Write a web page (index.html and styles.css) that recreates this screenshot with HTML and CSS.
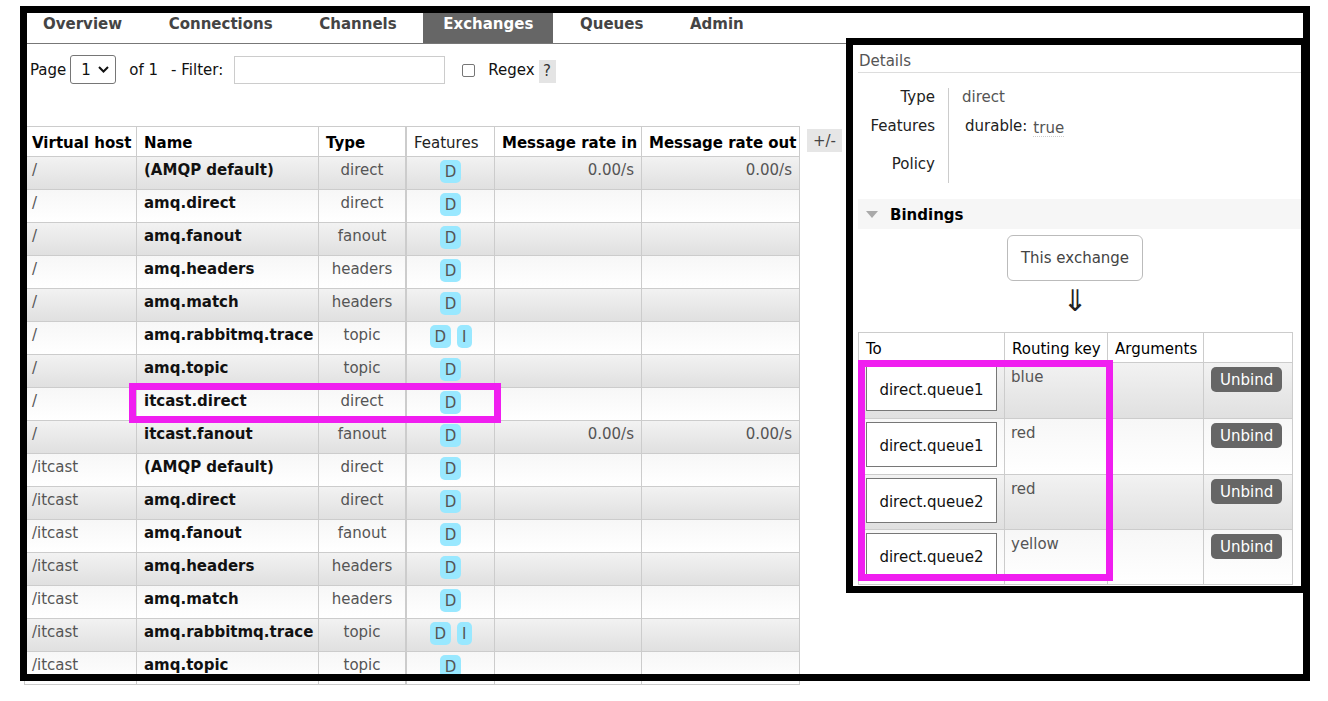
FILE: index.html
```html
<!DOCTYPE html>
<html>
<head>
<meta charset="utf-8">
<title>Exchanges</title>
<link rel="stylesheet" href="styles.css">
</head>
<body>
<div class="page">
  <ul class="tabs">
    <li class="tab">Overview</li>
    <li class="tab">Connections</li>
    <li class="tab">Channels</li>
    <li class="tab active">Exchanges</li>
    <li class="tab">Queues</li>
    <li class="tab">Admin</li>
  </ul>
  <div class="filter">
    <span class="lbl">Page</span>
    <span class="select">1<svg class="chev" width="11" height="7" viewBox="0 0 11 7"><polyline points="1,1 5.5,5.5 10,1" fill="none" stroke="#111" stroke-width="2"/></svg></span>
    <span class="of">of 1</span>
    <span class="flt">- Filter:</span>
    <span class="input"></span>
    <span class="check"></span>
    <span class="regex">Regex</span>
    <span class="help">?</span>
  </div>
  <div class="list-wrap">
    <table class="list">
      <colgroup><col class="c1"><col class="c2"><col class="c3"><col class="c4"><col class="c5"><col class="c6"></colgroup>
      <thead>
        <tr><th>Virtual host</th><th>Name</th><th class="t">Type</th><th class="feat">Features</th><th>Message rate in</th><th>Message rate out</th></tr>
      </thead>
      <tbody>
        <tr><td class="vh">/</td><td class="nm">(AMQP default)</td><td class="t">direct</td><td class="f"><span class="badge">D</span></td><td class="r">0.00/s</td><td class="r">0.00/s</td></tr>
        <tr><td class="vh">/</td><td class="nm">amq.direct</td><td class="t">direct</td><td class="f"><span class="badge">D</span></td><td></td><td></td></tr>
        <tr><td class="vh">/</td><td class="nm">amq.fanout</td><td class="t">fanout</td><td class="f"><span class="badge">D</span></td><td></td><td></td></tr>
        <tr><td class="vh">/</td><td class="nm">amq.headers</td><td class="t">headers</td><td class="f"><span class="badge">D</span></td><td></td><td></td></tr>
        <tr><td class="vh">/</td><td class="nm">amq.match</td><td class="t">headers</td><td class="f"><span class="badge">D</span></td><td></td><td></td></tr>
        <tr><td class="vh">/</td><td class="nm">amq.rabbitmq.trace</td><td class="t">topic</td><td class="f"><span class="badge">D</span><span class="badge b2">I</span></td><td></td><td></td></tr>
        <tr><td class="vh">/</td><td class="nm">amq.topic</td><td class="t">topic</td><td class="f"><span class="badge">D</span></td><td></td><td></td></tr>
        <tr><td class="vh">/</td><td class="nm">itcast.direct</td><td class="t">direct</td><td class="f"><span class="badge">D</span></td><td></td><td></td></tr>
        <tr><td class="vh">/</td><td class="nm">itcast.fanout</td><td class="t">fanout</td><td class="f"><span class="badge">D</span></td><td class="r">0.00/s</td><td class="r">0.00/s</td></tr>
        <tr><td class="vh">/itcast</td><td class="nm">(AMQP default)</td><td class="t">direct</td><td class="f"><span class="badge">D</span></td><td></td><td></td></tr>
        <tr><td class="vh">/itcast</td><td class="nm">amq.direct</td><td class="t">direct</td><td class="f"><span class="badge">D</span></td><td></td><td></td></tr>
        <tr><td class="vh">/itcast</td><td class="nm">amq.fanout</td><td class="t">fanout</td><td class="f"><span class="badge">D</span></td><td></td><td></td></tr>
        <tr><td class="vh">/itcast</td><td class="nm">amq.headers</td><td class="t">headers</td><td class="f"><span class="badge">D</span></td><td></td><td></td></tr>
        <tr><td class="vh">/itcast</td><td class="nm">amq.match</td><td class="t">headers</td><td class="f"><span class="badge">D</span></td><td></td><td></td></tr>
        <tr><td class="vh">/itcast</td><td class="nm">amq.rabbitmq.trace</td><td class="t">topic</td><td class="f"><span class="badge">D</span><span class="badge b2">I</span></td><td></td><td></td></tr>
        <tr><td class="vh">/itcast</td><td class="nm">amq.topic</td><td class="t">topic</td><td class="f"><span class="badge">D</span></td><td></td><td></td></tr>
      </tbody>
    </table>
    <span class="plusminus">+/-</span>
  </div>
</div>

<div class="panel">
  <div class="sec-title">Details</div>
  <div class="facts">
    <div class="f-label">Type</div><div class="f-val">direct</div>
    <div class="f-label">Features</div><div class="f-val f-feat"><span class="k">durable:</span><span class="v">true</span></div>
    <div class="f-label">Policy</div><div class="f-val"></div>
  </div>
  <div class="sec-head"><span class="tri"></span>Bindings</div>
  <div class="bindings">
    <div class="exch"><span class="exch-box">This exchange</span></div>
    <div class="arrow">⇓</div>
    <table class="btable">
      <colgroup><col class="b1"><col class="b2c"><col class="b3"><col class="b4"></colgroup>
      <thead><tr><th>To</th><th>Routing key</th><th>Arguments</th><th></th></tr></thead>
      <tbody>
        <tr><td><span class="qbox">direct.queue1</span></td><td class="rk">blue</td><td></td><td><span class="unbind">Unbind</span></td></tr>
        <tr><td><span class="qbox">direct.queue1</span></td><td class="rk">red</td><td></td><td><span class="unbind">Unbind</span></td></tr>
        <tr><td><span class="qbox">direct.queue2</span></td><td class="rk">red</td><td></td><td><span class="unbind">Unbind</span></td></tr>
        <tr><td><span class="qbox">direct.queue2</span></td><td class="rk">yellow</td><td></td><td><span class="unbind">Unbind</span></td></tr>
      </tbody>
    </table>
  </div>
</div>

<div class="frame-outer"></div>
<div class="mark mark-row"></div>
<div class="mark mark-bind"></div>
</body>
</html>
```

FILE: styles.css
```css
* { box-sizing: border-box; }
body {
  margin: 0;
  font-family: "DejaVu Sans", Verdana, sans-serif;
  font-size: 15px;
  line-height: 18px;
  color: #222;
  background: #fff;
}
.page { padding: 13px 0 0 23px; }

/* tabs */
.tabs {
  display: flex;
  list-style: none;
  margin: 0;
  padding: 0;
  width: 830px;
  border-bottom: 1px solid #777;
}
.tab {
  padding: 2px 20px 10px;
  margin-right: 6.6px;
  font-weight: bold;
  color: #444;
}
.tab.active { background: #666; color: #fff; }

/* filter row */
.filter {
  display: flex;
  align-items: center;
  height: 29px;
  margin-top: 11px;
  padding-left: 7px;
  padding-top: 1px;
  color: #111;
}
.select {
  display: flex;
  align-items: center;
  width: 46px;
  height: 29px;
  margin-left: 4px;
  margin-top: -1px;
  border: 1px solid #767676;
  border-radius: 3px;
  padding-left: 10px;
}
.chev { margin-left: 7px; }
.of { margin-left: 13px; }
.flt { margin-left: 13px; }
.input {
  width: 211px;
  height: 28px;
  margin-left: 11px;
  margin-top: -1px;
  border: 1px solid #ccc;
}
.check {
  width: 13px;
  height: 13px;
  margin-left: 17px;
  border: 1px solid #767676;
  border-radius: 2px;
}
.regex { margin-left: 13px; }
.help {
  margin-left: 4px;
  width: 17px;
  height: 23px;
  line-height: 23px;
  text-align: center;
  background: #e4e4e4;
  color: #333;
  margin-top: 3px;
}

/* main list */
.list-wrap {
  display: flex;
  align-items: flex-start;
  margin-top: 42px;
  margin-left: 1px;
}
table.list {
  border-collapse: separate;
  border-spacing: 0;
  table-layout: fixed;
  width: 776px;
  border-top: 1px solid #ccc;
  border-left: 1px solid #ccc;
}
col.c1 { width: 112px; }
col.c2 { width: 182px; }
col.c3 { width: 88px; }
col.c4 { width: 88px; }
col.c5 { width: 147px; }
col.c6 { width: 158px; }
table.list th, table.list td {
  border-right: 1px solid #ccc;
  border-bottom: 1px solid #ccc;
  padding: 0 7px;
  white-space: nowrap;
}
table.list th {
  height: 30px;
  vertical-align: bottom;
  padding-bottom: 4px;
  text-align: left;
  font-weight: bold;
  color: #000;
  background: #fff;
}
table.list th.feat { font-weight: normal; color: #222; }
table.list th.t, table.list td.t { border-right-width: 2px; }
table.list td {
  height: 33px;
  vertical-align: top;
  padding-top: 4px;
  color: #555;
}
table.list tbody tr:nth-child(odd) td { background: linear-gradient(#f2f2f2, #e0e0e0); }
table.list tbody tr:nth-child(even) td { background: linear-gradient(#f7f7f7, #ffffff); }
table.list td.nm { font-weight: bold; color: #111; }
table.list td.t { text-align: center; }
table.list td.f { text-align: center; }
table.list td.r { text-align: right; }
.badge {
  display: inline-block;
  vertical-align: top;
  height: 23px;
  margin-top: -1px;
  padding: 2px 5px 0;
  line-height: 21px;
  border-radius: 5px;
  background: #99e8ff;
  color: #555;
}
.badge.b2 { margin-left: 6px; }
.plusminus {
  margin-left: 7px;
  margin-top: 3px;
  height: 23px;
  padding: 2px 6px 0;
  line-height: 20px;
  background: #e6e6e6;
  color: #444;
}

/* details panel (pasted overlay) */
.panel {
  position: absolute;
  left: 846px;
  top: 38px;
  width: 462px;
  height: 555px;
  border: 7px solid #000;
  background: #fff;
  padding-left: 5px;
}
.sec-title {
  padding: 7px 0 2px 1px;
  border-bottom: 1px solid #ddd;
  color: #555;
}
.facts {
  display: grid;
  grid-template-columns: 91px 1fr;
  grid-template-rows: 29px 38px 28px;
  margin-top: 15px;
}
.f-label {
  text-align: right;
  padding-right: 13px;
  border-right: 1px solid #ccc;
  color: #222;
}
.f-val { padding-left: 13px; color: #555; }
.f-val.f-feat { padding-left: 16px; color: #222; }
.f-feat .v {
  margin-left: 6px;
  color: #555;
  display: inline-block;
  position: relative;
  top: 2px;
  line-height: 16px;
  border-bottom: 1px dotted #ccc;
}
.sec-head {
  display: flex;
  align-items: center;
  height: 30px;
  margin-top: 16px;
  padding-top: 1px;
  background: #f6f6f6;
  font-weight: bold;
  color: #000;
}
.tri {
  width: 0;
  height: 0;
  margin-left: 8px;
  margin-right: 12px;
  border-left: 6px solid transparent;
  border-right: 6px solid transparent;
  border-top: 7px solid #aaa;
}
.bindings { width: 434px; }
.exch { display: flex; justify-content: center; margin-top: 6px; }
.exch-box {
  height: 46px;
  line-height: 45px;
  padding: 0 13px;
  border: 1px solid #bbb;
  border-radius: 6px;
  color: #444;
}
.arrow {
  height: 51px;
  padding-top: 3px;
  text-align: center;
  font-size: 30px;
  line-height: 34px;
  color: #222;
}
table.btable {
  border-collapse: separate;
  border-spacing: 0;
  table-layout: fixed;
  width: 435px;
  border-top: 1px solid #ccc;
  border-left: 1px solid #ccc;
}
col.b1 { width: 146px; }
col.b2c { width: 103px; }
col.b3 { width: 96px; }
col.b4 { width: 89px; }
table.btable th, table.btable td {
  border-right: 1px solid #ccc;
  border-bottom: 1px solid #ccc;
  white-space: nowrap;
}
table.btable th {
  height: 30px;
  vertical-align: bottom;
  padding: 0 6px 4px 7px;
  text-align: left;
  font-weight: normal;
  color: #000;
  background: #fff;
}
table.btable td {
  height: 56px;
  vertical-align: top;
  padding: 3px 6px 0 7px;
}
table.btable tbody tr:nth-child(n+3) td { height: 55px; }
table.btable tbody tr:nth-child(odd) td { background: linear-gradient(#f2f2f2, #e0e0e0); }
table.btable tbody tr:nth-child(even) td { background: linear-gradient(#f7f7f7, #ffffff); }
table.btable td.rk { padding: 5px 6px 0; color: #555; }
.qbox {
  display: block;
  width: 131px;
  height: 45px;
  padding-top: 3px;
  line-height: 41px;
  text-align: center;
  border: 1px solid #777;
  background: #fff;
  color: #111;
}
.unbind {
  display: inline-block;
  margin-top: 1px;
  height: 25px;
  line-height: 26px;
  padding: 0 9px;
  border-radius: 5px;
  background: #666;
  color: #fff;
}

/* annotation overlays */
.frame-outer {
  position: absolute;
  left: 20px;
  top: 6px;
  width: 1290px;
  height: 675px;
  border: 7px solid #000;
  pointer-events: none;
}
.mark {
  position: absolute;
  border: 7px solid #f01ef0;
  pointer-events: none;
}
.mark-row { left: 129px; top: 383px; width: 372px; height: 40px; }
.mark-bind { left: 858px; top: 360px; width: 255px; height: 221px; }
```
